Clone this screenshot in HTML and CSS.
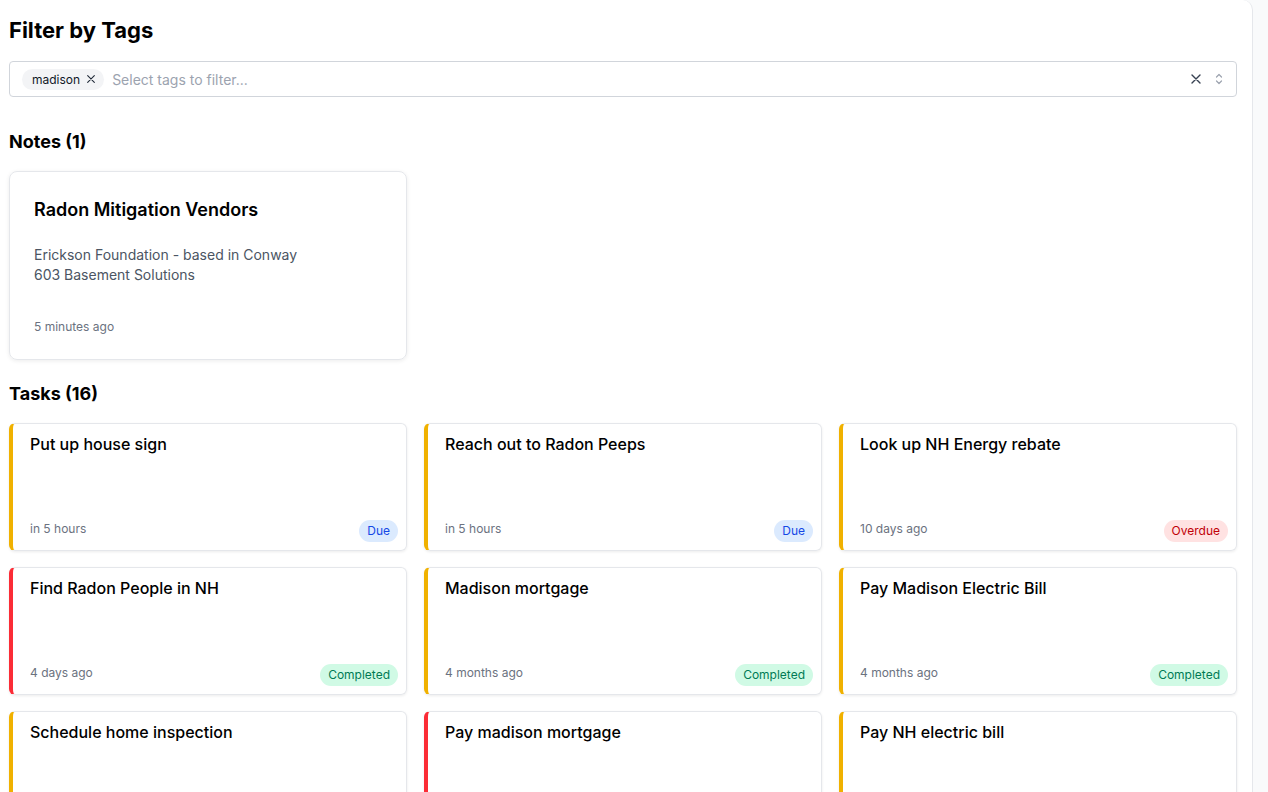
FILE: index.html
```html
<html>
<head>
  <title>Filter by Tags</title>
  <link rel="stylesheet" href="styles.css">
</head>
<body>
  <div class="layout">
    <div class="panel">
      <h1 class="pageTitle">Filter by Tags</h1>

      <div class="tagSelect">
        <div class="tagList">
          <span class="chip">madison
            <svg class="chipX" viewBox="0 0 12 12" width="10" height="10"><path d="M2 2l8 8M10 2l-8 8" stroke="#1f2937" stroke-width="1.3" stroke-linecap="round"/></svg>
          </span>
          <span class="placeholder">Select tags to filter...</span>
        </div>
        <div class="selectIcons">
          <svg viewBox="0 0 12 12" width="12" height="12"><path d="M2 2l8 8M10 2l-8 8" stroke="#374151" stroke-width="1.4" stroke-linecap="round"/></svg>
          <svg viewBox="0 0 10 14" width="10" height="14"><path d="M2.5 5l2.5-2.5 2.5 2.5M2.5 9l2.5 2.5 2.5-2.5" fill="none" stroke="#9ca3af" stroke-width="1.2" stroke-linecap="round" stroke-linejoin="round"/></svg>
        </div>
      </div>

      <h2 class="sectionTitle notesTitle">Notes (1)</h2>
      <div class="grid">
        <div class="noteCard">
          <h3 class="noteTitle">Radon Mitigation Vendors</h3>
          <div class="noteBody">
            <p>Erickson Foundation - based in Conway</p>
            <p>603 Basement Solutions</p>
          </div>
          <div class="timeText">5 minutes ago</div>
        </div>
      </div>

      <h2 class="sectionTitle tasksTitle">Tasks (16)</h2>
      <div class="grid">
        <div class="taskCard amber">
          <div class="taskTitle">Put up house sign</div>
          <div class="taskFoot"><span class="timeText">in 5 hours</span><span class="badge due">Due</span></div>
        </div>
        <div class="taskCard amber">
          <div class="taskTitle">Reach out to Radon Peeps</div>
          <div class="taskFoot"><span class="timeText">in 5 hours</span><span class="badge due">Due</span></div>
        </div>
        <div class="taskCard amber">
          <div class="taskTitle">Look up NH Energy rebate</div>
          <div class="taskFoot"><span class="timeText">10 days ago</span><span class="badge overdue">Overdue</span></div>
        </div>
        <div class="taskCard red">
          <div class="taskTitle">Find Radon People in NH</div>
          <div class="taskFoot"><span class="timeText">4 days ago</span><span class="badge done">Completed</span></div>
        </div>
        <div class="taskCard amber">
          <div class="taskTitle">Madison mortgage</div>
          <div class="taskFoot"><span class="timeText">4 months ago</span><span class="badge done">Completed</span></div>
        </div>
        <div class="taskCard amber">
          <div class="taskTitle">Pay Madison Electric Bill</div>
          <div class="taskFoot"><span class="timeText">4 months ago</span><span class="badge done">Completed</span></div>
        </div>
        <div class="taskCard amber">
          <div class="taskTitle">Schedule home inspection</div>
          <div class="taskFoot"><span class="timeText">2 months ago</span><span class="badge done">Completed</span></div>
        </div>
        <div class="taskCard red">
          <div class="taskTitle">Pay madison mortgage</div>
          <div class="taskFoot"><span class="timeText">1 month ago</span><span class="badge done">Completed</span></div>
        </div>
        <div class="taskCard amber">
          <div class="taskTitle">Pay NH electric bill</div>
          <div class="taskFoot"><span class="timeText">1 month ago</span><span class="badge done">Completed</span></div>
        </div>
      </div>
    </div>
  </div>
</body>
</html>
```

FILE: styles.css
```css
html, body {
  height: 100%;
  margin: 0;
  overflow: hidden;
}

body {
  background: #f9fafb;
  font-family: Inter, "Noto Sans", Arial, sans-serif;
  color: #111;
}

.layout {
  display: flex;
  height: 100%;
}

.panel {
  width: 1253px;
  box-sizing: border-box;
  background: white;
  border-right: 1px solid #e5e7eb;
  border-top-right-radius: 10px;
  padding: 16px 15px 0 9px;
}

.pageTitle {
  margin: 0;
  font-size: 22px;
  line-height: 28px;
  font-weight: 700;
  color: #000;
}

.tagSelect {
  margin-top: 17px;
  height: 36px;
  box-sizing: border-box;
  border: 1px solid #d1d5db;
  border-radius: 4px;
  display: flex;
  align-items: center;
  justify-content: space-between;
  padding: 0 12px 0 12px;
}

.tagList {
  display: flex;
  align-items: center;
  gap: 8px;
}

.chip {
  display: inline-flex;
  align-items: center;
  gap: 6px;
  background: #f3f4f6;
  border-radius: 999px;
  height: 21px;
  padding: 0 8px 0 10px;
  font-size: 12px;
  color: #111827;
}

.placeholder {
  font-size: 14px;
  color: #9ca3af;
}

.selectIcons {
  display: flex;
  align-items: center;
  gap: 12px;
}

.sectionTitle {
  margin: 0;
  font-size: 18px;
  line-height: 28px;
  font-weight: 700;
  color: #000;
}

.notesTitle {
  margin-top: 31px;
  margin-bottom: 15px;
}

.tasksTitle {
  margin-top: 20px;
  margin-bottom: 15px;
}

.grid {
  display: grid;
  grid-template-columns: repeat(3, 1fr);
  column-gap: 17px;
  row-gap: 16px;
}

.noteCard {
  border: 1px solid #e5e7eb;
  border-radius: 8px;
  box-shadow: 0 1px 4px rgba(0,0,0,0.08);
  padding: 24px;
  height: 189px;
  box-sizing: border-box;
}

.noteTitle {
  margin: 0;
  font-size: 18px;
  line-height: 28px;
  font-weight: 600;
  color: #000;
}

.noteBody {
  margin-top: 21px;
  margin-bottom: 34px;
  font-size: 14px;
  line-height: 20px;
  color: #4b5563;
}

.noteBody p {
  margin: 0;
}

.timeText {
  font-size: 12px;
  line-height: 16px;
  color: #6b7280;
}

.taskCard {
  height: 128px;
  box-sizing: border-box;
  border: 1px solid #e5e7eb;
  border-left: 4px solid #f0b100;
  border-radius: 6px;
  box-shadow: 0 1px 3px rgba(0,0,0,0.08);
  padding: 8px 8px 8px 17px;
  display: flex;
  flex-direction: column;
  justify-content: space-between;
}

.taskCard.red {
  border-left-color: #fb2c36;
}

.taskTitle {
  font-size: 16px;
  line-height: 24px;
  font-weight: 500;
  color: #000;
}

.taskFoot {
  display: flex;
  justify-content: space-between;
  align-items: center;
}

.taskFoot .timeText {
  margin-bottom: 4px;
}

.badge {
  font-size: 12px;
  line-height: 16px;
  padding: 3px 8px;
  border-radius: 999px;
}

.due {
  background: #dbeafe;
  color: #1447e6;
}

.overdue {
  background: #ffe2e2;
  color: #c10007;
}

.done {
  background: #d0fae5;
  color: #007a55;
}
```
